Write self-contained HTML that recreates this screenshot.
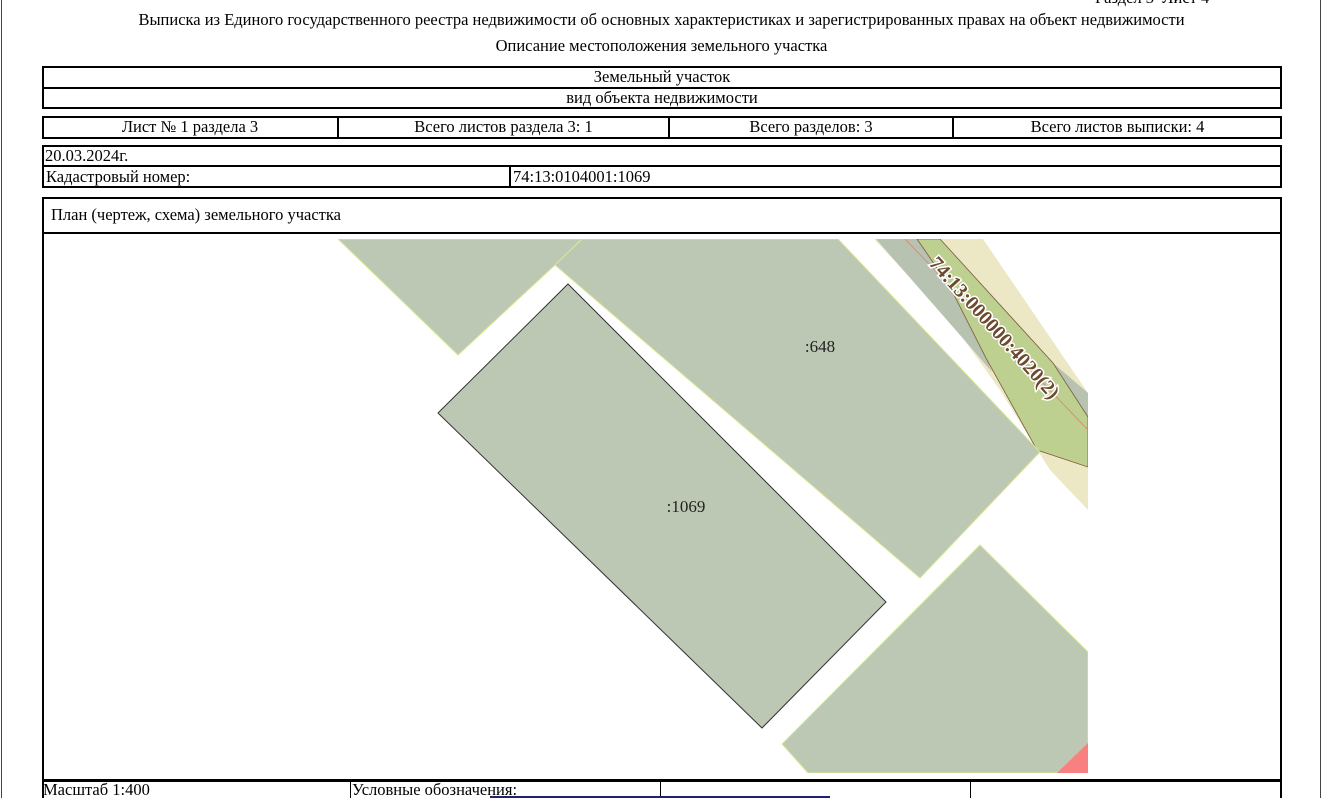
<!DOCTYPE html>
<html><head><meta charset="utf-8"><style>
body{margin:0;width:1323px;height:798px;overflow:hidden;background:#fff;position:relative;font-family:"Liberation Serif","DejaVu Serif",serif;font-size:16.5px;color:#000}
.a{position:absolute}
.bx{position:absolute;border:2px solid #000;box-sizing:border-box}
.c{position:absolute;line-height:20px;white-space:nowrap}
.v{position:absolute;width:2px;background:#000}
</style></head><body>
<div class="a" style="left:1px;top:0;width:1px;height:798px;background:#444"></div>
<div class="a" style="left:1320px;top:0;width:1px;height:798px;background:#444"></div>
<div class="c" style="left:1095px;top:-12px">Раздел 3 &nbsp;Лист 4</div>
<div class="c" style="left:0;width:1323px;text-align:center;top:10px">Выписка из Единого государственного реестра недвижимости об основных характеристиках и зарегистрированных правах на объект недвижимости</div>
<div class="c" style="left:0;width:1323px;text-align:center;top:36px">Описание местоположения земельного участка</div>

<div class="bx" style="left:42px;top:66px;width:1240px;height:23px"></div>
<div class="c" style="left:42px;width:1240px;text-align:center;top:67px">Земельный участок</div>
<div class="bx" style="left:42px;top:87px;width:1240px;height:22px"></div>
<div class="c" style="left:42px;width:1240px;text-align:center;top:88px">вид объекта недвижимости</div>

<div class="bx" style="left:42px;top:116px;width:1240px;height:23px"></div>
<div class="v" style="left:337px;top:116px;height:23px"></div>
<div class="v" style="left:668px;top:116px;height:23px"></div>
<div class="v" style="left:952px;top:116px;height:23px"></div>
<div class="c" style="left:42px;width:296px;text-align:center;top:117px">Лист № 1 раздела 3</div>
<div class="c" style="left:338px;width:331px;text-align:center;top:117px">Всего листов раздела 3: 1</div>
<div class="c" style="left:669px;width:284px;text-align:center;top:117px">Всего разделов: 3</div>
<div class="c" style="left:953px;width:329px;text-align:center;top:117px">Всего листов выписки: 4</div>

<div class="bx" style="left:42px;top:145px;width:1240px;height:22px"></div>
<div class="c" style="left:45px;top:146px">20.03.2024г.</div>
<div class="bx" style="left:42px;top:165px;width:1240px;height:23px"></div>
<div class="v" style="left:509px;top:165px;height:23px"></div>
<div class="c" style="left:46px;top:167px">Кадастровый номер:</div>
<div class="c" style="left:513px;top:167px">74:13:0104001:1069</div>

<div class="bx" style="left:42px;top:197px;width:1240px;height:37px"></div>
<div class="c" style="left:51px;top:205px">План (чертеж, схема) земельного участка</div>
<div class="bx" style="left:42px;top:232px;width:1240px;height:550px"></div>

<svg class="a" style="left:0;top:0" width="1323" height="798">
<defs><clipPath id="m"><rect x="44" y="239" width="1044" height="534"/></clipPath></defs>
<g clip-path="url(#m)">
<polygon points="874,239 983,239 1088,393 1088,510 1050,470 1000,390 950,320" fill="#ece8c6"/>
<polygon points="876,239 917,239 950,287 987,360 992,372 960,335" fill="#b8c2b0"/>
<polygon points="1053,363 1088,393 1088,417" fill="#b8c2b0"/>
<polygon points="917,239 940,239 1053,363 1088,417 1088,467 1037,450 987,360 950,287" fill="#bdd08f" stroke="#7a5a40" stroke-width="0.8"/>
<line x1="905" y1="239" x2="1088" y2="430" stroke="#e08070" stroke-width="0.8"/>
<polygon points="338,239 582,239 555,265 458,355" fill="#bdc8b4" stroke="#d8e890" stroke-width="1"/>
<polygon points="555,265 582,239 838,239 1040,452 920,578" fill="#bdc8b4" stroke="#d8e890" stroke-width="1"/>
<polygon points="568,284 886,602 762,728 438,413" fill="#bdc8b4" stroke="#333" stroke-width="1"/>
<polygon points="980,545 1088,652 1088,773 808,773 782,744" fill="#bdc8b4" stroke="#d8e890" stroke-width="1"/>
<polygon points="1088,743 1088,773 1057,773" fill="#f88080"/>
<text x="820" y="352" font-family="Liberation Serif" font-size="17" text-anchor="middle" fill="#222">:648</text>
<text x="686" y="512" font-family="Liberation Serif" font-size="17" text-anchor="middle" fill="#222">:1069</text>
<text x="0" y="0" transform="translate(993,329) rotate(48)" font-family="Liberation Serif" font-size="20" font-weight="bold" text-anchor="middle" dominant-baseline="middle" fill="#6b4a2e" stroke="#fff" stroke-width="3" paint-order="stroke">74:13:000000:4020(2)</text>
</g>
</svg>

<div class="a" style="left:42px;top:779px;width:1240px;height:3px;background:#000"></div>
<div class="v" style="left:42px;top:780px;height:18px"></div>
<div class="v" style="left:1280px;top:780px;height:18px"></div>
<div class="a" style="left:350px;top:780px;width:1px;height:18px;background:#000"></div>
<div class="a" style="left:660px;top:780px;width:1px;height:18px;background:#000"></div>
<div class="a" style="left:970px;top:780px;width:1px;height:18px;background:#000"></div>
<div class="c" style="left:43px;top:780px">Масштаб 1:400</div>
<div class="c" style="left:352px;top:780px">Условные обозначения:</div>
<div class="a" style="left:490px;top:796px;width:340px;height:2px;background:#22226a"></div>
</body></html>
